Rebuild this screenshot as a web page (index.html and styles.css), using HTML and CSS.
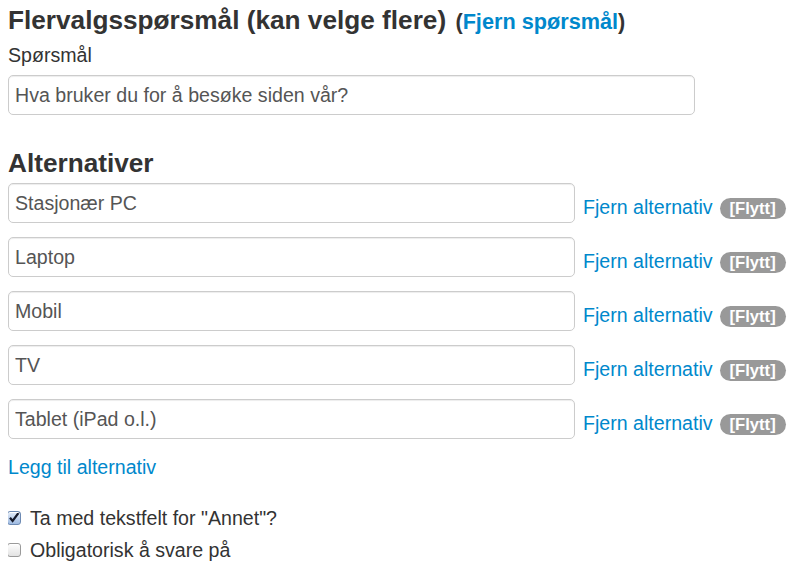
FILE: index.html
```html
<!DOCTYPE html>
<html lang="no">
<head>
<meta charset="utf-8">
<title>Flervalgsspørsmål</title>
<link rel="stylesheet" href="styles.css">
</head>
<body>
<div class="question">
  <h3 class="title">Flervalgsspørsmål (kan velge flere) <span class="remove-q">(<a href="#">Fjern spørsmål</a>)</span></h3>
  <label class="field-label" for="q">Spørsmål</label>
  <input class="text-input wide" id="q" type="text" value="Hva bruker du for å besøke siden vår?">

  <h3 class="section">Alternativer</h3>
  <ul class="options">
    <li class="option"><input class="text-input" type="text" value="Stasjonær PC"><a href="#" class="opt-link">Fjern alternativ</a><span class="badge">[Flytt]</span></li>
    <li class="option"><input class="text-input" type="text" value="Laptop"><a href="#" class="opt-link">Fjern alternativ</a><span class="badge">[Flytt]</span></li>
    <li class="option"><input class="text-input" type="text" value="Mobil"><a href="#" class="opt-link">Fjern alternativ</a><span class="badge">[Flytt]</span></li>
    <li class="option"><input class="text-input" type="text" value="TV"><a href="#" class="opt-link">Fjern alternativ</a><span class="badge">[Flytt]</span></li>
    <li class="option"><input class="text-input" type="text" value="Tablet (iPad o.l.)"><a href="#" class="opt-link">Fjern alternativ</a><span class="badge">[Flytt]</span></li>
  </ul>
  <a href="#" class="add-link">Legg til alternativ</a>

  <label class="check first"><input type="checkbox" class="cb" checked> Ta med tekstfelt for "Annet"?</label>
  <label class="check"><input type="checkbox" class="cb"> Obligatorisk å svare på</label>
</div>
</body>
</html>
```

FILE: styles.css
```css
* { box-sizing: border-box; }
html, body { background: #fff; }
body {
  margin: 0 8px;
  font-family: "Liberation Sans", Arial, Helvetica, sans-serif;
  font-size: 19.6px;
  color: #333;
}
a { color: #0088cc; text-decoration: none; }

.title, .section {
  margin: 0;
  height: 40px;
  font-size: 26.2px;
  line-height: 40px;
  font-weight: bold;
  color: #333;
  white-space: nowrap;
}
.remove-q { font-size: 21.7px; line-height: 1; margin-left: 2px; }
.section { margin-top: 28px; }

.field-label {
  display: block;
  line-height: 28px;
  margin: 1px 0 6px;
}

.text-input {
  display: block;
  height: 40px;
  width: 567px;
  padding: 0 6px;
  border: 1px solid #ccc;
  border-radius: 5px;
  font-family: inherit;
  font-size: 19.6px;
  color: #555;
  background: #fff;
  box-shadow: inset 0 1px 1px rgba(0,0,0,0.075);
}
.text-input.wide { width: 687px; }

.options { list-style: none; margin: 0; padding: 0; }
.option {
  display: flex;
  align-items: flex-end;
  margin-bottom: 14px;
}
.opt-link {
  margin-left: 8px;
  margin-bottom: 2px;
  line-height: 28px;
}
.badge {
  margin-left: 7px;
  margin-bottom: 4px;
  height: 21px;
  line-height: 21px;
  padding: 0 10px;
  border-radius: 11px;
  background: #999;
  color: #fff;
  font-size: 16.6px;
  font-weight: bold;
}

.add-link { display: block; line-height: 28px; width: max-content; }

.check {
  display: flex;
  align-items: center;
  line-height: 28px;
  margin-bottom: 4px;
}
.check.first { margin-top: 23px; }
.cb {
  appearance: none;
  -webkit-appearance: none;
  width: 14px;
  height: 14px;
  margin: 0 9px 0 -1px;
  border: 1px solid #9a9a9a;
  border-radius: 3px;
  background: linear-gradient(#fdfdfd, #e3e3e3);
  box-shadow: inset 0 1px 0 #fff;
  flex: none;
}
.cb:checked {
  border-color: #6d8ab3;
  background: url("data:image/svg+xml;utf8,<svg xmlns='http://www.w3.org/2000/svg' width='14' height='14' viewBox='0 0 14 14'><path d='M3 6.8 L5.6 10 L12.5 0.5' fill='none' stroke='%23161a2a' stroke-width='2.2'/></svg>") no-repeat center / 14px 14px, linear-gradient(#e3ecf8, #9fbbe2);
}
```
